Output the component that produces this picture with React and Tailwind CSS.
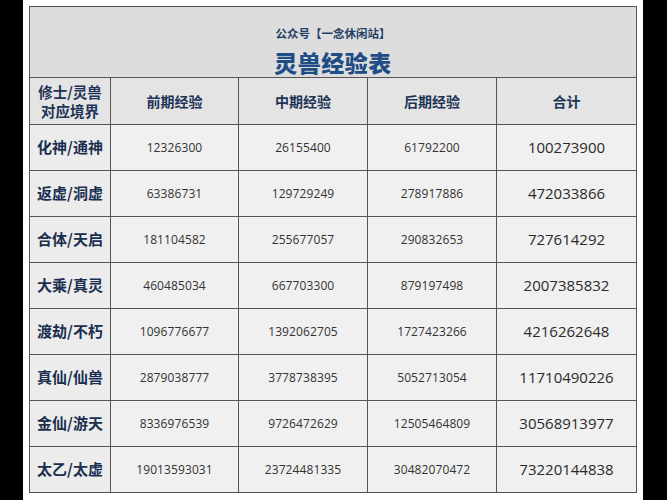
import React from "react";

const rows = [
  ["化神/通神", "12326300", "26155400", "61792200", "100273900"],
  ["返虚/洞虚", "63386731", "129729249", "278917886", "472033866"],
  ["合体/天启", "181104582", "255677057", "290832653", "727614292"],
  ["大乘/真灵", "460485034", "667703300", "879197498", "2007385832"],
  ["渡劫/不朽", "1096776677", "1392062705", "1727423266", "4216262648"],
  ["真仙/仙兽", "2879038777", "3778738395", "5052713054", "11710490226"],
  ["金仙/游天", "8336976539", "9726472629", "12505464809", "30568913977"],
  ["太乙/太虚", "19013593031", "23724481335", "30482070472", "73220144838"],
];

export default function App() {
  return (
    <div className="w-[667px] h-[500px] bg-black flex">
      <div className="ml-[23px] w-[620px] h-[500px] bg-white pt-[6px] pl-[6px]">
        <div className="w-[608px] bg-[#555555] p-px grid gap-px grid-cols-[80px_127px_128px_128px_139px] font-['Noto_Sans_CJK_SC','Noto_Sans',sans-serif]">
          <div className="col-span-5 h-[70px] bg-[#dddddd] flex flex-col items-center">
            <div className="mt-[18px] text-[11.5px] leading-[16px] font-bold text-[#243f66]">公众号【一念休闲站】</div>
            <div className="mt-[7px] text-[23px] leading-[28px] font-black text-[#1f4d86] tracking-[0.5px]">灵兽经验表</div>
          </div>
          <div className="h-[46px] bg-[#e4e4e4] flex flex-col items-center justify-center text-[14.5px] leading-[19px] font-bold text-[#1e3456]">
            <span>修士/灵兽</span>
            <span>对应境界</span>
          </div>
          {["前期经验", "中期经验", "后期经验", "合计"].map((h) => (
            <div key={h} className="h-[46px] bg-[#e4e4e4] flex items-center justify-center text-[14px] font-bold text-[#1e3456]">
              {h}
            </div>
          ))}
          {rows.map((r) => (
            <React.Fragment key={r[0]}>
              <div className="h-[45px] bg-[#ececec] flex items-center justify-center text-[15px] font-bold text-[#1a2f50]">
                {r[0]}
              </div>
              {r.slice(1, 4).map((v, i) => (
                <div key={i} className="h-[45px] bg-[#f0f0f0] flex items-center justify-center text-[12px] text-[#333333] tracking-[0.1px] font-['Open_Sans','Noto_Sans',sans-serif]">
                  {v}
                </div>
              ))}
              <div className="h-[45px] bg-[#f0f0f0] flex items-center justify-center text-[15px] text-[#2a2a2a] font-['Open_Sans','Noto_Sans',sans-serif]">
                {r[4]}
              </div>
            </React.Fragment>
          ))}
        </div>
      </div>
    </div>
  );
}
